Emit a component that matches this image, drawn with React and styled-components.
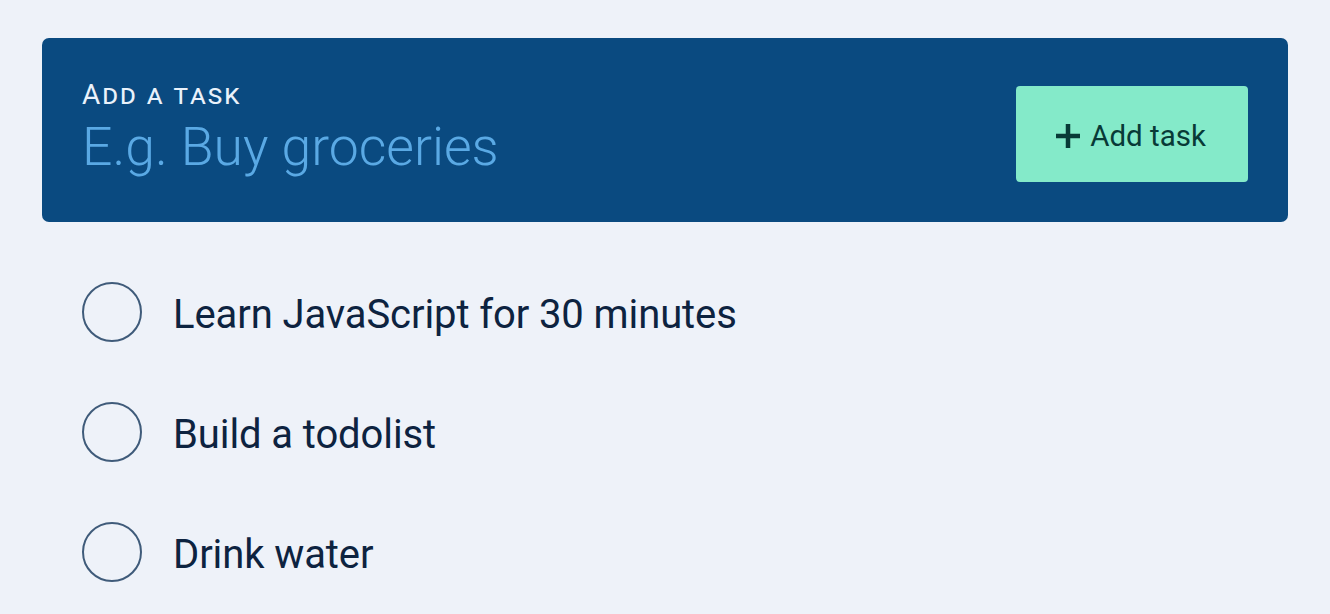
import React from "react";
import styled, { createGlobalStyle } from "styled-components";

const Global = createGlobalStyle`
  html, body { margin: 0; padding: 0; background: #eef2f9; }
  body { font-family: Roboto, "Noto Sans", sans-serif; }
`;

const Page = styled.div`
  padding: 38px 42px 0 42px;
`;

const Panel = styled.form`
  background: #0a4a80;
  border-radius: 7px;
  height: 184px;
  box-sizing: border-box;
  padding: 0 40px;
  display: flex;
  align-items: center;
  justify-content: space-between;
`;

const Field = styled.label`
  display: flex;
  flex-direction: column;
  flex: 1;
`;

const Label = styled.span`
  color: #eaf2fb;
  font-size: 28px;
  font-variant: small-caps;
  letter-spacing: 2px;
  line-height: 30px;
  margin-top: -1px;
`;

const Input = styled.input`
  background: transparent;
  border: none;
  outline: none;
  padding: 0;
  margin-top: 5px;
  font-family: Roboto, sans-serif;
  font-weight: 300;
  font-size: 53.5px;
  line-height: 64px;
  color: #fff;
  &::placeholder { color: #5aa9e4; }
`;

const AddButton = styled.button`
  width: 232px;
  height: 96px;
  margin-top: 8px;
  padding: 4px 2px 0 0;
  border: none;
  border-radius: 4px;
  background: #84eac9;
  color: #083a37;
  font-family: Roboto, sans-serif;
  font-size: 29.5px;
  display: flex;
  align-items: center;
  justify-content: center;
  gap: 10px;
  cursor: pointer;
`;

const List = styled.ul`
  list-style: none;
  margin: 0;
  padding: 60px 0 0 40px;
  display: flex;
  flex-direction: column;
  gap: 60px;
`;

const Item = styled.li`
  display: flex;
  align-items: center;
  gap: 31px;
  height: 60px;
`;

const Circle = styled.span`
  width: 60px;
  height: 60px;
  box-sizing: border-box;
  border: 2px solid #3f5b7a;
  border-radius: 50%;
  flex: none;
`;

const Text = styled.span`
  font-size: 40px;
  color: #0d2340;
  padding-top: 4px;
  letter-spacing: -0.1px;
`;

const tasks = ["Learn JavaScript for 30 minutes", "Build a todolist", "Drink water"];

export default function App() {
  return (
    <>
      <Global />
      <Page>
        <Panel onSubmit={(e) => e.preventDefault()}>
          <Field>
            <Label>Add a task</Label>
            <Input placeholder="E.g. Buy groceries" />
          </Field>
          <AddButton type="submit">
            <svg width="24" height="24" viewBox="0 0 24 24">
              <path d="M12 0v24M0 12h24" stroke="#083a37" strokeWidth="4.5" />
            </svg>
            Add task
          </AddButton>
        </Panel>
        <List>
          {tasks.map((t) => (
            <Item key={t}>
              <Circle />
              <Text>{t}</Text>
            </Item>
          ))}
        </List>
      </Page>
    </>
  );
}
